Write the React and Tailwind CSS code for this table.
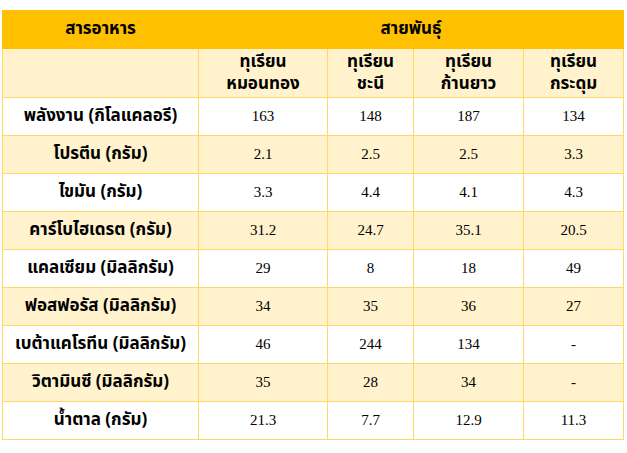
import React from "react";

const varieties = [
  ["ทุเรียน", "หมอนทอง"],
  ["ทุเรียน", "ชะนี"],
  ["ทุเรียน", "ก้านยาว"],
  ["ทุเรียน", "กระดุม"],
];

const rows = [
  ["พลังงาน (กิโลแคลอรี)", "163", "148", "187", "134"],
  ["โปรตีน (กรัม)", "2.1", "2.5", "2.5", "3.3"],
  ["ไขมัน (กรัม)", "3.3", "4.4", "4.1", "4.3"],
  ["คาร์โบไฮเดรต (กรัม)", "31.2", "24.7", "35.1", "20.5"],
  ["แคลเซียม (มิลลิกรัม)", "29", "8", "18", "49"],
  ["ฟอสฟอรัส (มิลลิกรัม)", "34", "35", "36", "27"],
  ["เบต้าแคโรทีน (มิลลิกรัม)", "46", "244", "134", "-"],
  ["วิตามินซี (มิลลิกรัม)", "35", "28", "34", "-"],
  ["น้ำตาล (กรัม)", "21.3", "7.7", "12.9", "11.3"],
];

const thai = "font-['Tahoma','Noto_Sans_Thai','DejaVu_Sans',sans-serif] font-bold";

export default function App() {
  return (
    <div className="w-[627px] h-[453px] bg-white pt-[10px] pl-[2px]">
      <table className="border-collapse table-fixed w-[621px] text-black">
        <colgroup>
          <col className="w-[196px]" />
          <col className="w-[129px]" />
          <col className="w-[86px]" />
          <col className="w-[110px]" />
          <col className="w-[100px]" />
        </colgroup>
        <thead>
          <tr className="h-[38px] bg-[#ffc000]">
            <th className={`${thai} text-[17px] border border-[#ffc000] text-center`}>สารอาหาร</th>
            <th colSpan={4} className={`${thai} text-[17px] border border-[#ffc000] text-center`}>
              สายพันธุ์
            </th>
          </tr>
          <tr className="h-[49px] bg-[#fff2cc]">
            <th className="border border-[#ffd966]"></th>
            {varieties.map((v) => (
              <th
                key={v[1]}
                className={`${thai} text-[17px] leading-[22px] border border-[#ffd966] text-center`}
              >
                {v[0]}
                <br />
                {v[1]}
              </th>
            ))}
          </tr>
        </thead>
        <tbody>
          {rows.map((r, i) => (
            <tr key={r[0]} className={`h-[38px] ${i % 2 === 1 ? "bg-[#fff2cc]" : "bg-white"}`}>
              <td className={`${thai} text-[17px] border border-[#ffd966] text-center`}>{r[0]}</td>
              {r.slice(1).map((v, j) => (
                <td
                  key={j}
                  className="font-['Liberation_Serif',serif] text-[15px] border border-[#ffd966] text-center"
                >
                  {v}
                </td>
              ))}
            </tr>
          ))}
        </tbody>
      </table>
    </div>
  );
}
